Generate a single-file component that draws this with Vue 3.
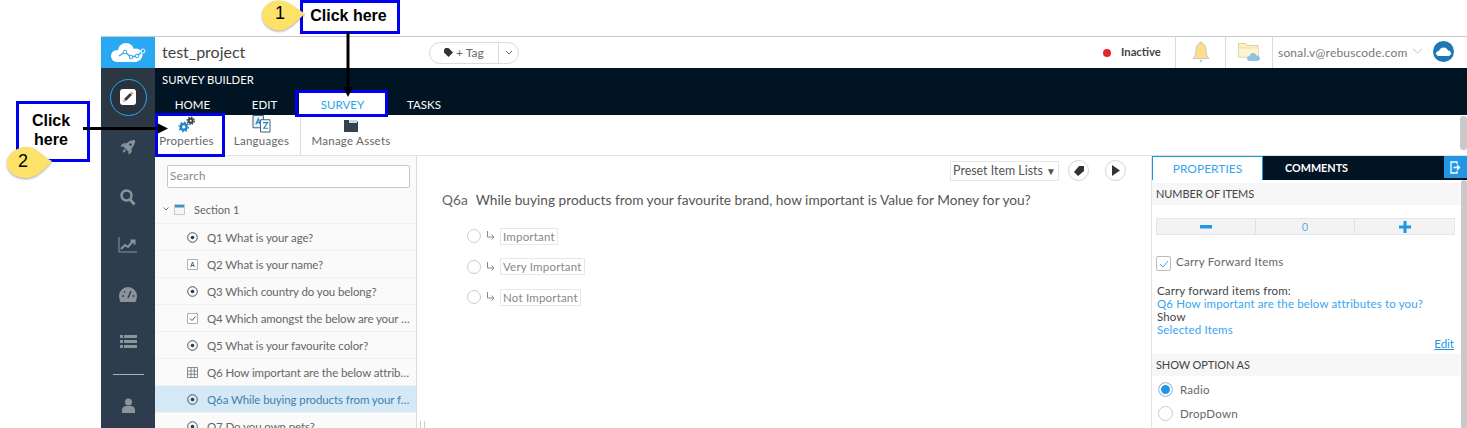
<script setup>
const tabs = ['HOME', 'EDIT', 'SURVEY', 'TASKS']

const questions = [
  { icon: 'radio', text: 'Q1 What is your age?' },
  { icon: 'text', text: 'Q2 What is your name?' },
  { icon: 'radio', text: 'Q3 Which country do you belong?' },
  { icon: 'check', text: 'Q4 Which amongst the below are your favourite brands?' },
  { icon: 'radio', text: 'Q5 What is your favourite color?' },
  { icon: 'grid', text: 'Q6 How important are the below attributes to you?' },
  { icon: 'radio', text: 'Q6a While buying products from your favourite brand?', active: true },
  { icon: 'radio', text: 'Q7 Do you own pets?' },
]

const options = ['Important', 'Very Important', 'Not Important']
</script>

<template>
  <div class="page">
    <div class="app">
      <aside class="sidebar">
        <div class="logo">
          <svg width="36" height="20" viewBox="0 0 36 20">
            <circle cx="7" cy="13" r="6" fill="#fff" />
            <circle cx="16" cy="8" r="8" fill="#fff" />
            <circle cx="26" cy="12" r="6.500" fill="#fff" />
            <path d="M7 13h20v6H7z" fill="#fff" />
            <path d="M9 13l6-4 6 5 6-1 6-5" fill="none" stroke="#29a9f1" stroke-width="1.400" />
            <circle cx="15" cy="9" r="1.800" fill="#fff" stroke="#29a9f1" />
            <circle cx="21" cy="14" r="1.800" fill="#fff" stroke="#29a9f1" />
            <circle cx="27" cy="13" r="1.800" fill="#fff" stroke="#29a9f1" />
            <circle cx="33" cy="8" r="2" fill="#29a9f1" stroke="#fff" />
          </svg>
        </div>
        <div class="side-top">
          <div class="edit-ring">
            <div class="edit-box">
              <svg width="12" height="12" viewBox="0 0 12 12">
                <path d="M2 8L8 2l2 2-6 6z" fill="#2e3d4d" />
                <path d="M8.500 1.500l1-1 2 2-1 1z" fill="#e58b3a" />
                <path d="M1.500 8.500l2 2-2.500.5z" fill="#e58b3a" />
              </svg>
            </div>
          </div>
        </div>
        <div class="side-icons">
          <svg class="rocket" width="20" height="20" viewBox="0 0 20 20">
            <g transform="rotate(45 10 10)" fill="#8c949b">
              <path d="M10 0c2.500 2.500 3.500 5 3.500 8v5h-7V8c0-3 1-5.500 3.500-8z" />
              <path d="M6.500 8L4 11v4l2.500-2zM13.500 8L16 11v4l-2.500-2zM8.500 14h3L10 18z" />
              <circle cx="10" cy="6.500" r="1.300" fill="#2e3d4d" />
            </g>
          </svg>
          <svg class="search" width="16" height="17" viewBox="0 0 16 17"><circle cx="6.500" cy="6.500" r="5" fill="none" stroke="#8c949b" stroke-width="2.500" /><path d="M10 10.500l4.500 5" stroke="#8c949b" stroke-width="2.800" /></svg>
          <svg class="chart" width="20" height="16" viewBox="0 0 20 16"><path d="M1 0v15h18" fill="none" stroke="#8c949b" /><path d="M3 12l4-4 3 2 5-6M12.500 3.500H16.500V7.500" fill="none" stroke="#8c949b" stroke-width="2" /></svg>
          <svg class="gauge" width="18" height="15" viewBox="0 0 18 15"><path d="M9 0a9 9 0 0 0-9 9c0 2 .5 4 1.500 6h15c1-2 1.500-4 1.500-6a9 9 0 0 0-9-9z" fill="#8c949b" /><path d="M9 11l3-7M3 9h2M13.500 9h2M5 4.500l1 1" stroke="#2e3d4d" stroke-width="1.500" /></svg>
          <svg class="list" width="17" height="14" viewBox="0 0 17 14"><path d="M0 0h3v3H0zM4 0h13v3H4zM0 5h3v3H0zM4 5h13v3H4zM0 10h3v3H0zM4 10h13v3H4z" fill="#8c949b" /></svg>
          <div class="side-rule"></div>
          <svg class="user" width="13" height="15" viewBox="0 0 13 15"><circle cx="6.500" cy="4" r="3.500" fill="#8c949b" /><path d="M0 15v-3c0-2.500 2-4 4-4h5c2 0 4 1.500 4 4v3z" fill="#8c949b" /></svg>
        </div>
      </aside>

      <div class="content">
        <header class="topbar">
          <div class="project">test_project</div>
          <div class="tag-pill">
            <span class="tag-label">
              <svg width="9" height="9" viewBox="0 0 9 9"><path d="M0 1.500L1.500 0h3L9 4.500 4.500 9 0 4.500z" fill="#333" /></svg>
              + Tag
            </span>
            <span class="tag-caret">
              <svg width="8" height="5" viewBox="0 0 8 5"><path d="M1 1l3 3 3-3" fill="none" stroke="#666" /></svg>
            </span>
          </div>
          <div class="status"><i class="dot"></i>Inactive</div>
          <div class="top-cell bell">
            <svg width="18" height="23" viewBox="0 0 18 23"><path d="M9 1c1 0 1.500.7 1.500 1.500C13 3.500 14 6 14 9.500c0 3.500 1 6 3 8H1c2-2 3-4.500 3-8C4 6 5 3.500 7.500 2.500 7.500 1.700 8 1 9 1z" fill="#fbdf8a" stroke="#9cb3c4" stroke-width=".6" /><path d="M7.500 19h3L9 21.500z" fill="#9cc3dd" /></svg>
          </div>
          <div class="top-cell folder">
            <svg width="23" height="21" viewBox="0 0 23 21"><path d="M.5 4V1.500h7l1.500 2h11V15H.5z" fill="#fdf0c0" stroke="#cbbf8f" stroke-width=".7" /><path d="M.5 6h20v9H.5z" fill="#fdf4d0" stroke="#d8cc9c" stroke-width=".5" /><path d="M12 19c-2 0-3-1-3-2.500S10 14 11.500 14c.5-2 2-3 3.500-3 2 0 3 1 3.500 2.500 2 0 3.500 1.500 3.500 3 0 1.500-1 2.500-3 2.500z" fill="#8fc3e4" /></svg>
          </div>
          <div class="user-email">sonal.v@rebuscode.com</div>
          <svg class="user-caret" width="11" height="6" viewBox="0 0 11 6"><path d="M1 1l4.500 4L10 1" fill="none" stroke="#c4c4c4" /></svg>
          <svg class="avatar" width="21" height="21" viewBox="0 0 21 21"><circle cx="10.500" cy="10.500" r="10.500" fill="#1b78b5" /><path d="M6 15c-2 0-3-1-3-2.500S4 10 6 10c.5-2 2.500-3.500 4.500-3.500 2.500 0 4 1.500 4.500 3 2 0 3 1.500 3 3s-1 2.500-3 2.500z" fill="#fff" /></svg>
        </header>

        <div class="band">
          <div class="band-title">SURVEY BUILDER</div>
          <nav class="tabs">
            <div v-for="t in tabs" :key="t" class="tab" :class="{ 'tab-on': t === 'SURVEY' }">{{ t }}</div>
          </nav>
        </div>

        <div class="toolbar">
          <div class="tool tool-props">
            <svg width="18" height="17" viewBox="0 0 22 20">
              <circle cx="7" cy="13" r="3.500" fill="none" stroke="#1b87c9" stroke-width="3" />
              <circle cx="7" cy="13" r="5.800" fill="none" stroke="#1b87c9" stroke-width="1.600" stroke-dasharray="2 2.500" />
              <circle cx="15.500" cy="5.500" r="2.500" fill="none" stroke="#35414d" stroke-width="2.500" />
              <circle cx="15.500" cy="5.500" r="4.500" fill="none" stroke="#35414d" stroke-width="1.400" stroke-dasharray="2 1.500" />
            </svg>
            <span>Properties</span>
          </div>
          <div class="tool tool-lang">
            <svg width="19" height="18" viewBox="0 0 20 19">
              <path d="M1 .5h11v13H1z" fill="#e8f4fb" stroke="#40566a" />
              <path d="M9 5h10v13H9z" fill="#fff" stroke="#40566a" />
              <path d="M4 10l2.500-6L9 10M5 8h3" fill="none" stroke="#1b87c9" stroke-width="1.200" />
              <path d="M11.500 8h5l-4 6h4.500" fill="none" stroke="#1b87c9" stroke-width="1.200" />
            </svg>
            <span>Languages</span>
          </div>
          <div class="tool tool-assets">
            <svg width="16" height="14" viewBox="0 0 16 14"><path d="M1 1h5l1 1.500h8V13H1z" fill="#35414d" /><path d="M6 1h8v3H6z" fill="#cfd8de" /></svg>
            <span>Manage Assets</span>
          </div>
          <div class="tool-scroll"></div>
        </div>

        <div class="workspace">
          <section class="tree">
            <div class="search-wrap"><input class="search-box" placeholder="Search" /></div>
            <div class="section-row">
              <svg width="6" height="4" viewBox="0 0 6 4"><path d="M.5.500L3 3 5.500.500" fill="none" stroke="#777" /></svg>
              <svg class="section-icon" width="11" height="11" viewBox="0 0 11 11"><path d="M.5.500h10v10H.5z" fill="#f4f6f8" stroke="#c3cbd1" /><path d="M1 1h9v2.500H1z" fill="#3f92c5" /></svg>
              <span>Section 1</span>
            </div>
            <div v-for="q in questions" :key="q.text" class="q-row" :class="{ 'q-on': q.active }">
              <svg class="q-icon" width="11" height="11" viewBox="0 0 11 11">
                <template v-if="q.icon === 'radio'">
                  <circle cx="5.500" cy="5.500" r="4.800" fill="none" stroke="#45525e" />
                  <circle cx="5.500" cy="5.500" r="1.800" fill="#2e3d4d" />
                </template>
                <template v-else-if="q.icon === 'text'">
                  <path d="M.5.500h10v10H.5z" fill="#fff" stroke="#a9b2ba" />
                  <path d="M3.700 8l1.800-5 1.800 5M4.300 6.500h2.400" fill="none" stroke="#45525e" stroke-width=".9" />
                </template>
                <template v-else-if="q.icon === 'check'">
                  <path d="M.5.500h10v10H.5z" fill="#fff" stroke="#a9b2ba" />
                  <path d="M3 5.500L5 7.500 8.500 3.500" fill="none" stroke="#45525e" />
                </template>
                <template v-else>
                  <path d="M.5.500h10v10H.5zM.5 4h10M.5 7.300h10M4 .500v10M7.300 .500v10" fill="none" stroke="#66727d" stroke-width=".8" />
                </template>
              </svg>
              <span class="q-text">{{ q.text }}</span>
            </div>
          </section>

          <section class="editor">
            <div class="editor-tools">
              <div class="preset">Preset Item Lists <span class="preset-caret">▼</span></div>
              <div class="round-btn">
                <svg width="12" height="12" viewBox="0 0 12 12"><path d="M1 7l5-6h5v5l-6 5z" fill="#333" /></svg>
              </div>
              <div class="round-btn">
                <svg width="9" height="11" viewBox="0 0 9 11"><path d="M1 0l8 5.500L1 11z" fill="#333" /></svg>
              </div>
            </div>
            <div class="question">
              <span class="q-num">Q6a</span>
              <span>While buying products from your favourite brand, how important is Value for Money for you?</span>
            </div>
            <div class="opts">
              <div v-for="o in options" :key="o" class="opt">
                <i class="opt-radio"></i>
                <svg width="9" height="10" viewBox="0 0 9 10"><path d="M1.500 0v6h6M5.500 3.500L8 6 5.500 8.500" fill="none" stroke="#888" /></svg>
                <span class="opt-label">{{ o }}</span>
              </div>
            </div>
            <div class="grip"></div>
          </section>

          <section class="props">
            <div class="props-tabs">
              <div class="ptab ptab-on">PROPERTIES</div>
              <div class="ptab ptab-dark">COMMENTS</div>
              <div class="ptab-exit">
                <svg width="11" height="13" viewBox="0 0 11 13"><path d="M7 3V1H1v11h6v-2" fill="none" stroke="#fff" stroke-width="1.300" /><path d="M3.500 6.500h6M7 4l2.500 2.500L7 9" fill="none" stroke="#fff" stroke-width="1.300" /></svg>
              </div>
            </div>
            <div class="props-body">
              <div class="props-inner">
                <div class="p-head">NUMBER OF ITEMS</div>
                <div class="stepper">
                  <div class="step"><svg width="12" height="4" viewBox="0 0 12 4"><path d="M0 0h12v3.500H0z" fill="#2196e8" /></svg></div>
                  <div class="step step-num">0</div>
                  <div class="step"><svg width="12" height="12" viewBox="0 0 12 12"><path d="M4.500 0h3v4.500H12v3H7.500V12h-3V7.500H0v-3h4.500z" fill="#2196e8" /></svg></div>
                </div>
                <div class="carry">
                  <div class="carry-box">
                    <svg width="10" height="8" viewBox="0 0 10 8"><path d="M1 4l3 3 5-6" fill="none" stroke="#4aa6e8" /></svg>
                  </div>
                  <span>Carry Forward Items</span>
                </div>
                <div class="carry-info">
                  <div>Carry forward items from:</div>
                  <div class="link">Q6 How important are the below attributes to you?</div>
                  <div>Show</div>
                  <div class="link">Selected Items</div>
                </div>
                <div class="edit-link">Edit</div>
                <div class="p-head">SHOW OPTION AS</div>
                <div class="radio-row"><i class="radio radio-on"></i>Radio</div>
                <div class="radio-row"><i class="radio"></i>DropDown</div>
              </div>
              <div class="props-scroll"></div>
            </div>
          </section>
        </div>
      </div>
    </div>

    <!-- annotations drawn on top of the screenshot -->
    <div class="hl hl-one">Click here</div>
    <div class="hl hl-two">Click<br />here</div>
    <div class="hl hl-survey"></div>
    <div class="hl hl-props"></div>
    <svg class="marks" width="1467" height="428" viewBox="0 0 1467 428">
      <path d="M348 32v55" stroke="#000" stroke-width="3" />
      <path d="M343 87h10l-5 10z" fill="#000" />
      <path d="M83 128.500h75" stroke="#000" stroke-width="3" />
      <path d="M158 123.500v10l10-5z" fill="#000" />
      <path class="pin" d="M279 0.500c-9 0-17 6-17 15 0 8 8 15 17 15 8 0 14-6 26-17-8-4-16-13-26-13z" />
      <path class="pin" d="M27 147c-11 0-20 7-20 16 0 8 6 15 20 15 9 0 18-9 25-17-8-3-15-14-25-14z" />
      <text x="275" y="19" class="mark-num">1</text>
      <text x="18" y="167" class="mark-num">2</text>
    </svg>
  </div>
</template>

<style scoped>
.page {
  position: relative;
  width: 1467px;
  height: 428px;
  overflow: hidden;
  padding: 36px 0 0 101px;
  box-sizing: border-box;
  background: #fff;
  font-family: Lato, "Open Sans", sans-serif;
  color: #555;
}

.app {
  display: flex;
  height: 392px;
  border-top: 1px solid #c9c9c9;
}

.sidebar {
  width: 54px;
  flex: none;
  background: #2e3d4d;
  display: flex;
  flex-direction: column;
  align-items: center;
}

.logo {
  width: 54px;
  height: 31px;
  background: #29a9f1;
  display: flex;
  align-items: center;
  justify-content: center;
  flex: none;
}

.side-top {
  height: 58px;
  width: 54px;
  background: #2b3743;
  display: flex;
  align-items: center;
  justify-content: center;
  flex: none;
}

.edit-ring {
  width: 37px;
  height: 37px;
  box-sizing: border-box;
  border: 1px solid #29a9f1;
  border-radius: 50%;
  display: flex;
  align-items: center;
  justify-content: center;
  background: #27323d;
}

.edit-box {
  width: 16px;
  height: 16px;
  background: #fff;
  border-radius: 3px;
  display: flex;
  align-items: center;
  justify-content: center;
}

.side-icons {
  display: flex;
  flex-direction: column;
  align-items: center;
  padding-top: 11px;
}

.search { margin-top: 32px; }
.chart { margin-top: 31px; }
.gauge { margin-top: 34px; }
.list { margin-top: 33px; }

.side-rule {
  width: 31px;
  height: 1px;
  background: #aab2b9;
  margin-top: 25px;
}

.user { margin-top: 23px; }

.content {
  flex: 1;
  min-width: 0;
  display: flex;
  flex-direction: column;
}

.topbar {
  height: 31px;
  display: flex;
  align-items: center;
  flex: none;
}

.project {
  margin: -2px 0 0 7px;
  width: 267px;
  font-size: 16px;
  color: #444;
}

.tag-pill {
  width: 90px;
  height: 22px;
  box-sizing: border-box;
  border: 1px solid #dcdcdc;
  border-radius: 11px;
  display: flex;
  align-items: center;
  font-size: 12px;
  color: #666;
}

.tag-label {
  width: 69px;
  padding-left: 14px;
  box-sizing: border-box;
  border-right: 1px solid #dcdcdc;
  line-height: 20px;
}

.tag-caret {
  flex: 1;
  display: flex;
  justify-content: center;
}

.status {
  margin: -2px 0 0 auto;
  width: 68px;
  display: flex;
  align-items: center;
  font-size: 11.300px;
  font-weight: 700;
  color: #444;
}

.dot {
  width: 8px;
  height: 8px;
  border-radius: 50%;
  background: #e3242b;
  margin: 2px 10px 0 0;
}

.top-cell {
  height: 31px;
  box-sizing: border-box;
  border-left: 1px solid #dcdcdc;
  display: flex;
  align-items: center;
  justify-content: center;
}

.bell { width: 50px; margin-left: 4px; }
.folder { width: 47px; }

.user-email {
  border-left: 1px solid #dcdcdc;
  height: 31px;
  line-height: 31px;
  padding-left: 5px;
  width: 133px;
  box-sizing: border-box;
  font-size: 12px;
  letter-spacing: .18px;
  color: #777;
}

.user-caret { margin-left: 7px; margin-top: -4px; }
.avatar { margin: -3px 13px 0 10px; }

.band {
  height: 47px;
  background: #001424;
  flex: none;
  display: flex;
  flex-direction: column;
  justify-content: space-between;
}

.band-title {
  font-size: 11.300px;
  color: #fff;
  margin: 5px 0 0 7px;
}

.tabs {
  display: flex;
  height: 22px;
}

.tab {
  font-size: 11.500px;
  color: #fff;
  line-height: 24px;
  width: 76px;
  text-align: center;
}

.tab:first-child { width: 75px; }
.tab:nth-child(2) { width: 69px; }

.tab-on {
  width: 87px;
  background: #fff;
  color: #29a3f0;
}

.toolbar {
  height: 41px;
  box-sizing: border-box;
  border-bottom: 1px solid #e2e2e2;
  display: flex;
  flex: none;
  font-size: 11.500px;
  color: #666;
  letter-spacing: .25px;
}

.tool {
  display: flex;
  flex-direction: column;
  align-items: center;
  justify-content: flex-end;
  padding-bottom: 7px;
  box-sizing: border-box;
}

.tool span { margin-top: 1px; line-height: 14px; }

.tool-props { width: 70px; padding-right: 7px; }
.tool-lang { width: 75px; padding-right: 2px; }

.tool-assets {
  width: 101px;
  border-left: 1px solid #dcdcdc;
}

.tool-scroll {
  margin: 1px 0 0 auto;
  width: 7px;
  height: 34px;
  background: #c9c9c9;
  border-radius: 3px;
}

.workspace {
  flex: 1;
  min-height: 0;
  display: flex;
}

.tree {
  width: 262px;
  flex: none;
  box-sizing: border-box;
  background: #fafafa;
  border-right: 1px solid #dcdcdc;
  overflow: hidden;
}

.search-wrap {
  padding: 9px 6px 0 12px;
}

.search-box {
  display: block;
  width: 100%;
  height: 23px;
  box-sizing: border-box;
  border: 1px solid #c8c8c8;
  border-radius: 2px;
  padding: 0 2px 2px;
  font: 11.500px Lato, sans-serif;
  letter-spacing: .3px;
  outline: none;
}

.search-box::placeholder { color: #888; }

.section-row {
  height: 28px;
  margin-top: 7px;
  padding: 0 0 0 8px;
  display: flex;
  align-items: center;
  font-size: 11px;
  color: #666;
}

.section-icon { margin: 1px 9px 0 5px; }

.q-row {
  height: 27px;
  display: flex;
  align-items: center;
  padding: 0 3px 0 32px;
  border-top: 1px solid #f1f1f1;
  box-sizing: border-box;
  font-size: 11.500px;
  color: #666;
  letter-spacing: -.1px;
}

.q-on {
  background: #d4e9f5;
  color: #3f82ab;
}

.q-icon { flex: none; margin-right: 9px; }

.q-text {
  white-space: nowrap;
  overflow: hidden;
  text-overflow: ellipsis;
}

.editor {
  position: relative;
  flex: 1;
  min-width: 0;
  padding: 4px 25px 0 25px;
  box-sizing: border-box;
}

.editor-tools {
  display: flex;
  justify-content: flex-end;
  align-items: center;
  gap: 8px;
}

.preset {
  width: 109px;
  height: 20px;
  box-sizing: border-box;
  border: 1px solid #e6e6e6;
  font-size: 12.400px;
  line-height: 18px;
  text-align: center;
  color: #555;
  margin-right: 1px;
  white-space: nowrap;
}

.preset-caret { font-size: 10px; }

.round-btn {
  width: 21px;
  height: 21px;
  box-sizing: border-box;
  border: 1px solid #d4d4d4;
  border-radius: 50%;
  display: flex;
  align-items: center;
  justify-content: center;
}

.round-btn + .round-btn { margin-left: 8px; }

.question {
  margin-top: 9px;
  font-size: 13.700px;
  line-height: 20px;
  color: #555;
  display: flex;
  gap: 8px;
  white-space: nowrap;
}

.q-num { color: #666; }

.opts {
  margin: 16px 0 0 25px;
  display: flex;
  flex-direction: column;
  gap: 10.500px;
}

.opt {
  display: flex;
  align-items: center;
  height: 20px;
}

.opt-radio {
  width: 14px;
  height: 14px;
  box-sizing: border-box;
  border: 1px solid #ccc;
  border-radius: 50%;
  margin-right: 5px;
}

.opt-label {
  margin-left: 5px;
  border: 1px solid #e8e8e8;
  font-size: 11.500px;
  line-height: 15px;
  padding: 0 2px;
  color: #888;
  letter-spacing: .2px;
}

.grip {
  position: absolute;
  left: 3px;
  bottom: 0;
  width: 3px;
  height: 8px;
  border-left: 1px solid #ccc;
  border-right: 1px solid #ccc;
}

.props {
  width: 316px;
  flex: none;
  border-left: 1px solid #e2e2e2;
  box-sizing: border-box;
  display: flex;
  flex-direction: column;
  overflow: hidden;
}

.props-tabs {
  display: flex;
  height: 24px;
  background: #001424;
  flex: none;
}

.ptab {
  width: 181px;
  line-height: 24px;
  font-size: 12px;
  color: #fff;
}

.ptab-on {
  width: 111px;
  box-sizing: border-box;
  background: #fff;
  color: #3aa5ef;
  text-align: center;
  border: 1px solid #1e96dd;
  border-bottom-width: 0;
  height: 24px;
}

.ptab-dark {
  font-weight: 700;
  font-size: 10.800px;
  padding-left: 22px;
  box-sizing: border-box;
}

.ptab-exit {
  flex: 1;
  height: 22px;
  background: #2196e8;
  display: flex;
  align-items: center;
  justify-content: center;
}

.props-body {
  flex: 1;
  display: flex;
  min-height: 0;
}

.props-inner {
  width: 309px;
  flex: none;
  padding-top: 3px;
  box-sizing: border-box;
}

.p-head {
  background: #f7f7f7;
  height: 22px;
  line-height: 22px;
  padding-left: 4px;
  font-size: 11px;
  letter-spacing: -.1px;
  color: #444;
}

.stepper {
  margin: 13px 6px 0 4px;
  height: 17px;
  display: grid;
  grid-template-columns: 1fr 1fr 1fr;
  background: #f3f3f3;
  border: 1px solid #e6e6e6;
  box-sizing: border-box;
}

.step {
  display: flex;
  align-items: center;
  justify-content: center;
  border-right: 1px solid #e2e2e2;
}

.step:last-child { border-right: 0; }

.step-num {
  font-size: 11px;
  color: #5aaeea;
}

.carry {
  display: flex;
  align-items: flex-start;
  margin: 21px 0 0 4px;
  font-size: 11.500px;
  letter-spacing: .25px;
  color: #666;
}

.carry-box {
  width: 15px;
  height: 15px;
  box-sizing: border-box;
  border: 1px solid #bbb;
  border-radius: 2px;
  display: flex;
  align-items: center;
  justify-content: center;
  margin-right: 5px;
}

.carry span { line-height: 12px; }

.carry-info {
  margin: 13px 0 0 5px;
  font-size: 11.500px;
  line-height: 13px;
  color: #444;
  letter-spacing: .15px;
}

.link { color: #3aa5ef; }

.edit-link {
  text-align: right;
  font-size: 11.500px;
  color: #2196e8;
  text-decoration: underline;
  padding-right: 7px;
  line-height: 13px;
  margin-top: 1px;
}

.edit-link + .p-head { margin-top: 4px; }

.radio-row {
  display: flex;
  align-items: center;
  height: 24px;
  padding-left: 6px;
  font-size: 11.500px;
  color: #666;
  letter-spacing: .25px;
}

.p-head + .radio-row { margin-top: 1px; }

.radio {
  width: 15px;
  height: 15px;
  box-sizing: border-box;
  border: 1px solid #ccc;
  border-radius: 50%;
  margin-right: 7px;
}

.radio-on {
  background: #2196e8;
  box-shadow: inset 0 0 0 2px #fff;
}

.props-scroll {
  width: 7px;
  background: #c9c9c9;
  border-radius: 3px;
}

/* overlays */
.marks {
  position: absolute;
  left: 0;
  top: 0;
  pointer-events: none;
}

.pin {
  fill: #fde269;
  filter: drop-shadow(0 1px 1px rgba(0, 0, 0, .35));
}

.mark-num {
  font: 18px "Liberation Sans", Arial, sans-serif;
  fill: #000;
}

.hl {
  position: absolute;
  box-sizing: border-box;
  border: 3px solid #0000f0;
  font: 700 16px/19px "Liberation Sans", Arial, sans-serif;
  color: #000;
  display: flex;
  align-items: center;
  justify-content: center;
  text-align: center;
}

.hl-one {
  left: 300px;
  top: 0;
  width: 100px;
  height: 34px;
  padding: 0 3px 3px 0;
  background: #fff;
}

.hl-two {
  left: 16px;
  top: 101px;
  width: 74px;
  height: 61px;
  padding: 0 4px 4px 0;
  background: #fff;
}

.hl-survey {
  left: 295px;
  top: 90px;
  width: 93px;
  height: 27px;
}

.hl-props {
  left: 155px;
  top: 113px;
  width: 70px;
  height: 44px;
}
</style>
